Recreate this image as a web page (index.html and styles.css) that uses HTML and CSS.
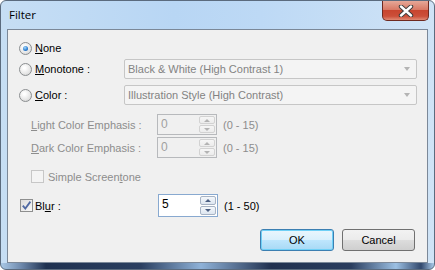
FILE: index.html
```html
<!DOCTYPE html>
<html lang="en">
<head>
    <meta charset="UTF-8">
    <title>Filter</title>
    <link rel="stylesheet" href="styles.css">
</head>
<body>
    <div class="window">
        <div class="titlebar">
            <span class="title">Filter</span>
            <span class="closeBtn">
                <svg width="16" height="12" viewBox="0 0 16 12">
                    <path d="M3 1.5 L13 10.5 M13 1.5 L3 10.5" stroke="#3b3b3b" stroke-width="4.4" stroke-linecap="round"/>
                    <path d="M3 1.5 L13 10.5 M13 1.5 L3 10.5" stroke="#ffffff" stroke-width="2.4" stroke-linecap="round"/>
                </svg>
            </span>
        </div>
        <div class="client">
            <div class="row rowNone">
                <span class="radio checked"><span class="dot"></span></span>
                <span class="optText"><u>N</u>one</span>
            </div>
            <div class="row rowMono">
                <span class="radio"></span>
                <span class="optText optLabel"><u>M</u>onotone :</span>
                <div class="combo">Black &amp; White (High Contrast 1)<span class="arrow"></span></div>
            </div>
            <div class="row rowColor">
                <span class="radio"></span>
                <span class="optText optLabel"><u>C</u>olor :</span>
                <div class="combo">Illustration Style (High Contrast)<span class="arrow"></span></div>
            </div>
            <div class="row rowLight sub">
                <span class="subLabel disabled"><u>L</u>ight Color Emphasis :</span>
                <div class="spin off">
                    <span class="spinValue">0</span>
                    <span class="spinBtns">
                        <span class="spinBtn"><span class="up"></span></span>
                        <span class="spinBtn"><span class="down"></span></span>
                    </span>
                </div>
                <span class="range disabled">(0 - 15)</span>
            </div>
            <div class="row rowDark sub">
                <span class="subLabel disabled"><u>D</u>ark Color Emphasis :</span>
                <div class="spin off">
                    <span class="spinValue">0</span>
                    <span class="spinBtns">
                        <span class="spinBtn"><span class="up"></span></span>
                        <span class="spinBtn"><span class="down"></span></span>
                    </span>
                </div>
                <span class="range disabled">(0 - 15)</span>
            </div>
            <div class="row rowSimple sub">
                <span class="check off"></span>
                <span class="checkText disabled">Simple Screen<u>t</u>one</span>
            </div>
            <div class="row rowBlur">
                <span class="check">
                    <svg width="11" height="11" viewBox="0 0 11 11">
                        <path d="M1.8 5.6 L4.3 8.6 L9.4 1.6" fill="none" stroke="#4f69a3" stroke-width="1.8"/>
                    </svg>
                </span>
                <span class="blurLabel">Bl<u>u</u>r :</span>
                <div class="spin on">
                    <span class="spinValue">5</span>
                    <span class="spinBtns">
                        <span class="spinBtn"><span class="up"></span></span>
                        <span class="spinBtn"><span class="down"></span></span>
                    </span>
                </div>
                <span class="range">(1 - 50)</span>
            </div>
            <div class="row rowButtons">
                <button class="btn btnDefault">OK</button>
                <button class="btn">Cancel</button>
            </div>
        </div>
    </div>
</body>
</html>
```

FILE: styles.css
```css
body {
    margin: 0;
    background-color: #ffffff;
}

.window {
    box-sizing: border-box;
    width: 435px;
    height: 270px;
    border: 1px solid #5b6b7e;
    border-radius: 6px;
    display: flex;
    flex-direction: column;
    background:
        linear-gradient(to right, #a9c8e6 0px, #6f8aad 20px, #1f3150 45px, #2b3f60 140px, #8fb2d8 200px, #21314f 270px, #2a3d5e 350px, #9cc0e3 395px, #32486c 420px, #aacbea 433px) bottom / 100% 6px no-repeat,
        linear-gradient(to right, #c6def4, #b8d6f4 40%, #bdd9f5 60%, #cfe3f6);
    font-family: "Liberation Sans", Arial, sans-serif;
    font-size: 11px;
    color: #000000;
}

.titlebar {
    height: 28px;
    display: flex;
    justify-content: space-between;
    align-items: flex-start;
    padding-left: 8px;
    padding-right: 5px;
}
.title {
    font-family: "Open Sans", "Noto Sans", sans-serif;
    font-size: 11.5px;
    line-height: 28px;
    color: #000000;
}
.closeBtn {
    box-sizing: border-box;
    width: 47px;
    height: 20px;
    border: 1px solid #6e2a20;
    border-top: none;
    border-radius: 0 0 5px 5px;
    background: linear-gradient(#e6a898, #d97a66 45%, #c8452f 50%, #cc4f39 80%, #e08a74);
    display: flex;
    align-items: center;
    justify-content: center;
}

.client {
    box-sizing: border-box;
    height: 234px;
    margin: 0 6px 6px 6px;
    border: 1px solid #7b8898;
    background-color: #f0f0f0;
    padding: 10px 10px 0 11px;
    display: flex;
    flex-direction: column;
}

.row {
    display: flex;
    align-items: center;
}
.rowNone { height: 16px; }
.rowMono { height: 20px; margin-top: 3px; }
.rowColor { height: 20px; margin-top: 6px; }
.rowLight { height: 21px; margin-top: 9px; }
.rowDark { height: 21px; margin-top: 2px; }
.rowSimple { height: 13px; margin-top: 12px; }
.rowBlur { height: 23px; margin-top: 11px; padding-left: 1px; }
.rowButtons {
    height: 22px;
    margin-top: 12px;
    justify-content: flex-end;
    padding-right: 2px;
    gap: 8px;
}
.sub { padding-left: 12px; }

.radio {
    box-sizing: border-box;
    width: 13px;
    height: 13px;
    border-radius: 50%;
    border: 1px solid #8b8e90;
    background: radial-gradient(circle at 40% 35%, #ffffff 10%, #e6e6e6 60%, #c9c9c9);
    display: flex;
    align-items: center;
    justify-content: center;
}
.dot {
    width: 5px;
    height: 5px;
    border-radius: 50%;
    background: radial-gradient(circle at 40% 35%, #a6dbfb, #2a7bd0 60%, #0f4c8f);
}
.optText { margin-left: 3px; }
.optLabel { width: 89px; }

.combo {
    box-sizing: border-box;
    width: 293px;
    height: 20px;
    border: 1px solid #c6c6c6;
    border-radius: 2px;
    background-color: #f4f4f4;
    color: #838383;
    padding-left: 3px;
    display: flex;
    align-items: center;
    justify-content: space-between;
}
.arrow {
    width: 0;
    height: 0;
    margin-right: 6px;
    border-left: 3.5px solid transparent;
    border-right: 3.5px solid transparent;
    border-top: 4px solid #b4b4b4;
}

.subLabel { width: 126px; }
.disabled { color: #8d8d8d; }

.spin {
    box-sizing: border-box;
    width: 60px;
    height: 21px;
    display: flex;
    justify-content: space-between;
    padding: 0 0 0 3px;
}
.spin.off {
    border: 1px solid #b7b9bc;
    background-color: #f0f0f0;
    color: #a0a0a0;
}
.spin.on {
    height: 23px;
    border: 1px solid #88a9d0;
    background-color: #ffffff;
}
.spinValue {
    padding-top: 2px;
    font-size: 12px;
}
.spinBtns {
    width: 16px;
    display: flex;
    flex-direction: column;
    gap: 1px;
    padding: 1px 1px 1px 0;
}
.spinBtn {
    flex: 1;
    box-sizing: border-box;
    border: 1px solid #d2d2d2;
    border-radius: 2px;
    background: linear-gradient(#f6f6f6, #ececec);
    display: flex;
    align-items: center;
    justify-content: center;
}
.spin.on .spinBtn {
    border-color: #a7b3c4;
    background: linear-gradient(#f4f7fb, #dde6f0);
}
.up, .down {
    width: 0;
    height: 0;
    border-left: 3px solid transparent;
    border-right: 3px solid transparent;
}
.up { border-bottom: 3px solid #b3b3b3; }
.down { border-top: 3px solid #b3b3b3; }
.spin.on .up { border-bottom-color: #4b5f82; }
.spin.on .down { border-top-color: #4b5f82; }

.range { margin-left: 6px; }

.check {
    box-sizing: border-box;
    width: 13px;
    height: 13px;
    border: 1px solid #8e8f8f;
    background: linear-gradient(135deg, #dcdcdc, #f8f8f8);
    display: flex;
    align-items: center;
    justify-content: center;
}
.check.off {
    border-color: #c7c7c7;
    background: #f4f4f4;
}
.checkText { margin-left: 4px; }
.blurLabel {
    width: 123px;
    margin-left: 2px;
}

.btn {
    box-sizing: border-box;
    width: 73px;
    height: 22px;
    border: 1px solid #707070;
    border-radius: 3px;
    background: linear-gradient(#f2f2f2, #ebebeb 49%, #dddddd 50%, #cfcfcf);
    font-family: "Liberation Sans", Arial, sans-serif;
    font-size: 11px;
    color: #000000;
    padding: 0;
}
.btnDefault {
    width: 74px;
    border-color: #3c7fb1;
    box-shadow: inset 0 0 0 1px #6fd0f6;
    background: linear-gradient(#eaf6fd, #d9f0fc 49%, #bee6fd 50%, #a7d9f5);
}
```
